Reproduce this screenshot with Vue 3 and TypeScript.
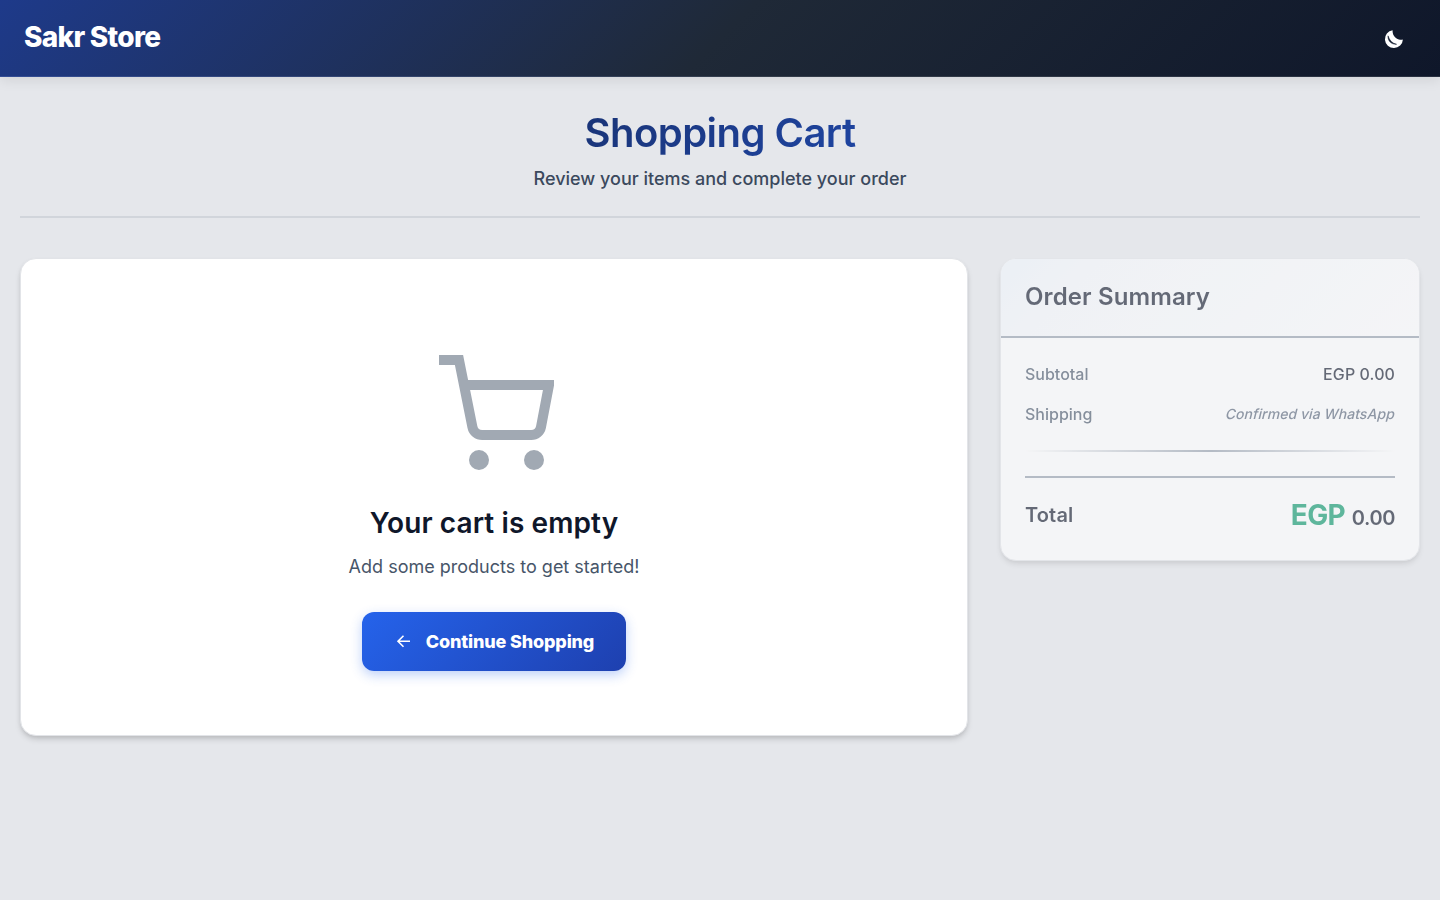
<script setup lang="ts">
interface SummaryRow {
  label: string
  value: string
  note?: boolean
}

const rows: SummaryRow[] = [
  { label: 'Subtotal', value: 'EGP 0.00' },
  { label: 'Shipping', value: 'Confirmed via WhatsApp', note: true },
]
</script>

<template>
  <div class="page">
    <header class="topbar">
      <span class="logo">Sakr Store</span>
      <button class="theme" aria-label="Toggle theme">
        <svg width="20" height="20" viewBox="0 0 20 20">
          <path class="moon" d="M8.6 1.2A9 9 0 1 0 18.9 10.6A8.6 8.6 0 0 1 8.6 1.2Z" />
          <path class="moon-line" d="M4 6.8C3.6 11.6 7 15.6 12.6 15.3C8.4 14.4 5.6 11.6 4 6.8Z" />
        </svg>
      </button>
    </header>

    <main class="main">
      <section class="intro">
        <h1>Shopping Cart</h1>
        <p>Review your items and complete your order</p>
      </section>

      <div class="columns">
        <section class="cart">
          <svg class="cart-icon" width="120" height="120" viewBox="0 0 24 24">
            <circle cx="9" cy="21" r="1" />
            <circle cx="20" cy="21" r="1" />
            <path d="M1 1h4l2.68 13.39a2 2 0 0 0 2 1.61h9.72a2 2 0 0 0 2-1.61L23 6H6" />
          </svg>
          <h2>Your cart is empty</h2>
          <p>Add some products to get started!</p>
          <a class="button">
            <svg width="20" height="20" viewBox="0 0 20 20">
              <path d="M16 9.3H4M9.5 3.8L4 9.3l5.5 5.5" />
            </svg>
            <span>Continue Shopping</span>
          </a>
        </section>

        <aside class="summary">
          <h3>Order Summary</h3>
          <div class="details">
            <div v-for="row in rows" :key="row.label" class="row">
              <span class="label">{{ row.label }}</span>
              <span :class="row.note ? 'note' : 'value'">{{ row.value }}</span>
            </div>
            <div class="fade"></div>
            <div class="total">
              <span>Total</span>
              <span class="amount"><b>EGP</b> 0.00</span>
            </div>
          </div>
        </aside>
      </div>
    </main>
  </div>
</template>

<style>
body {
  margin: 0;
  background: #e5e7eb;
}
</style>

<style scoped>
* {
  box-sizing: border-box;
}
h1, h2, h3, p {
  margin: 0;
}
.page {
  min-height: 900px;
  background: #e5e7eb;
  font-family: Inter, "Liberation Sans", sans-serif;
  color: #0f172a;
}
.topbar {
  position: relative;
  display: flex;
  align-items: center;
  justify-content: space-between;
  height: 77px;
  padding: 0 24px;
  background: linear-gradient(135deg, #1e3a8a 0%, #1f2937 50%, #0f172a 100%);
  border-bottom: 1px solid rgba(255, 255, 255, 0.1);
  box-shadow: 0 4px 12px rgba(0, 0, 0, 0.08);
}
.logo {
  color: #fff;
  font-size: 28px;
  font-weight: 800;
  letter-spacing: -0.72px;
  line-height: 40px;
  margin-top: -2px;
}
.theme {
  display: flex;
  align-items: center;
  justify-content: center;
  width: 44px;
  height: 44px;
  padding: 1px 0 0;
  border: 0;
  background: none;
}
.moon {
  fill: #fff;
}
.moon-line {
  fill: #111a2e;
  stroke: #111a2e;
  stroke-width: 0.5;
}
.main {
  padding: 32px 20px 0;
}
.intro {
  height: 109px;
  border-bottom: 2px solid #d1d5db;
  text-align: center;
}
.intro h1 {
  font-size: 40px;
  font-weight: 600;
  line-height: 48px;
  letter-spacing: -0.53px;
  background: linear-gradient(135deg, #0f172a 0%, #1c3c8c 50%, #2563eb 100%);
  -webkit-background-clip: text;
  background-clip: text;
  color: transparent;
}
.intro p {
  margin-top: 8px;
  font-size: 18px;
  line-height: 28px;
  font-weight: 500;
  color: #3b495d;
}
.columns {
  display: grid;
  grid-template-columns: minmax(0, 1fr) 420px;
  gap: 32px;
  align-items: start;
  margin-top: 40px;
}
.cart,
.summary {
  border: 1px solid #e2e4e8;
  border-radius: 16px;
  box-shadow: 0 4px 6px -1px rgba(0, 0, 0, 0.15), 0 2px 4px -1px rgba(0, 0, 0, 0.08);
}
.cart {
  display: flex;
  flex-direction: column;
  align-items: center;
  height: 478px;
  padding-top: 96px;
  background: #fff;
}
.cart-icon {
  overflow: hidden;
  fill: none;
  stroke: #a1a9b3;
  stroke-width: 2;
}
.cart h2 {
  margin-top: 28px;
  font-size: 28px;
  line-height: 40px;
  font-weight: 600;
  letter-spacing: 0.1px;
}
.cart p {
  margin-top: 10px;
  font-size: 18px;
  line-height: 28px;
  color: #475569;
}
.button {
  display: flex;
  align-items: center;
  gap: 12px;
  height: 59px;
  margin-top: 31px;
  padding: 0 32px;
  border-radius: 12px;
  background: linear-gradient(135deg, #2563eb 0%, #1e40af 100%);
  box-shadow: 0 4px 12px rgba(37, 99, 235, 0.3);
  color: #fff;
  font-size: 18px;
  font-weight: 800;
}
.button span {
  letter-spacing: -0.15px;
}
.button svg {
  fill: none;
  stroke: #fff;
  stroke-width: 1.6;
}
.summary {
  overflow: hidden;
  background: #fff;
  opacity: 0.6;
}
.summary h3 {
  height: 79px;
  padding: 20px 24px 0;
  border-bottom: 2px solid #949eac;
  background: linear-gradient(135deg, #f0f6fc, #f7f9fd 20%, #fff);
  font-size: 24px;
  line-height: 36px;
  font-weight: 600;
  letter-spacing: 0.12px;
}
.details {
  padding: 24px;
}
.row {
  display: flex;
  align-items: center;
  justify-content: space-between;
  height: 24px;
  margin-bottom: 16px;
  font-size: 16px;
}
.label {
  font-weight: 500;
  color: #475569;
}
.value {
  font-weight: 500;
  letter-spacing: 0.1px;
}
.note {
  margin-top: -1px;
  font-size: 14px;
  font-weight: 500;
  letter-spacing: 0.07px;
  color: #566378;
  transform: skewX(-14deg);
}
.fade {
  height: 2px;
  margin: 24px 0;
  background: linear-gradient(90deg, transparent, #949eac, transparent);
}
.total {
  display: flex;
  justify-content: space-between;
  align-items: center;
  height: 60px;
  padding-top: 16px;
  border-top: 2px solid #949eac;
  font-size: 20px;
  font-weight: 600;
}
.total > span:first-child {
  letter-spacing: 0.15px;
}
.amount {
  letter-spacing: -0.4px;
  word-spacing: 2px;
}
.amount b {
  font-size: 28px;
  font-weight: 700;
  letter-spacing: -0.6px;
  color: #059669;
}
</style>
